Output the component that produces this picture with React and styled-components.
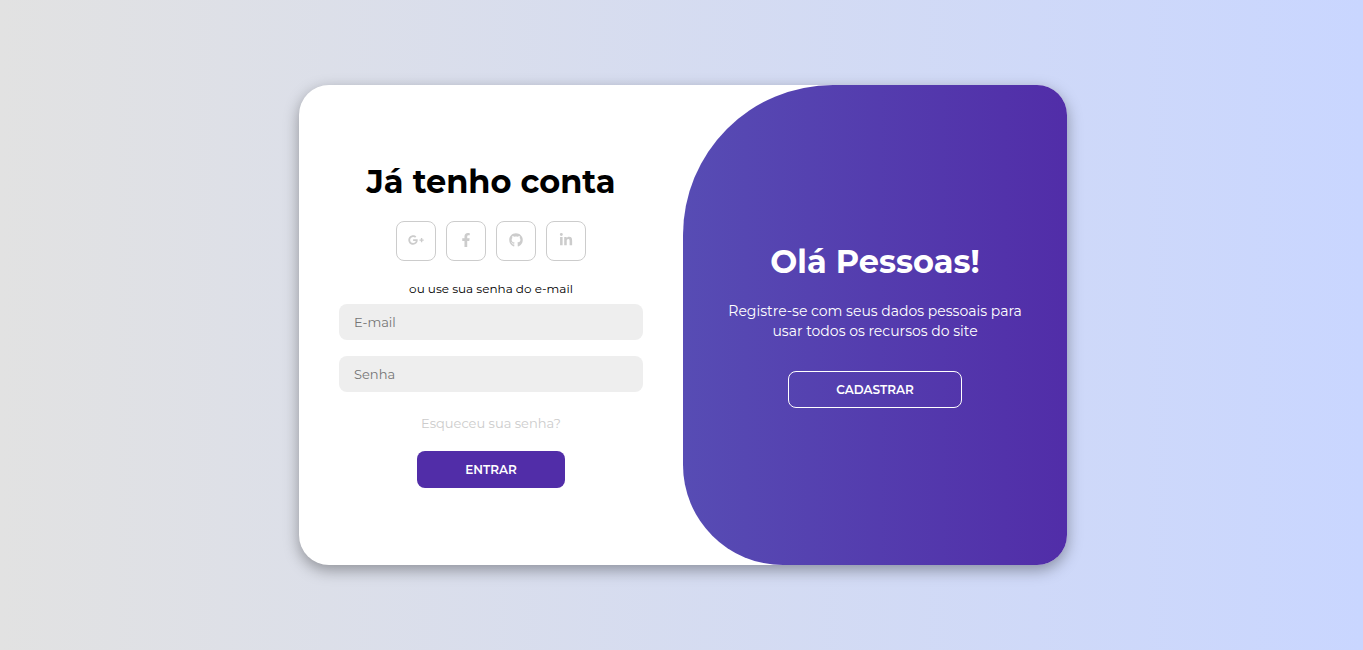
import React from "react";
import styled, { createGlobalStyle } from "styled-components";
import { FaGooglePlusG, FaFacebookF, FaGithub, FaLinkedinIn } from "react-icons/fa";

const GlobalStyle = createGlobalStyle`
  * {
    margin: 0;
    padding: 0;
    box-sizing: border-box;
    font-family: Montserrat, Inter, "Open Sans", sans-serif;
  }
`;

const Page = styled.main`
  display: flex;
  align-items: center;
  justify-content: center;
  min-height: 100vh;
  padding-left: 3px;
  background: linear-gradient(to right, #e2e2e2, #c9d6ff);
`;

const Card = styled.div`
  display: grid;
  grid-template-columns: 1fr 1fr;
  width: 768px;
  max-width: 100%;
  min-height: 480px;
  overflow: hidden;
  background: #fff;
  border-radius: 30px;
  box-shadow: 0 5px 15px rgba(0, 0, 0, 0.35);
`;

const LoginForm = styled.form`
  display: flex;
  flex-direction: column;
  align-items: center;
  justify-content: center;
  padding: 0 40px;
`;

const WelcomePanel = styled.section`
  display: flex;
  flex-direction: column;
  align-items: center;
  justify-content: center;
  padding: 0 30px;
  color: #fff;
  text-align: center;
  background: linear-gradient(to right, #574cb4, #512da8);
  border-radius: 150px 0 0 100px;
`;

const Title = styled.h1`
  font-size: 32px;
  font-weight: 700;
  line-height: 39px;
  white-space: nowrap;
`;

const SocialIcons = styled.nav`
  display: flex;
  gap: 10px;
  margin: 20px 0;
`;

const SocialLink = styled.a`
  display: flex;
  align-items: center;
  justify-content: center;
  width: 40px;
  height: 40px;
  padding-bottom: 2px;
  color: #ccc;
  border: 1px solid #ccc;
  border-radius: 8px;

  svg {
    width: ${({ $wide }) => ($wide ? "16px" : "14px")};
    height: ${({ $wide }) => ($wide ? "16px" : "14px")};
  }
`;

const Hint = styled.span`
  margin-bottom: 8px;
  color: #000;
  font-size: 12px;
  line-height: 15px;
`;

const Field = styled.input`
  width: 100%;
  height: 36px;
  margin-bottom: 16px;
  padding: 0 15px;
  color: #333;
  font-size: 13px;
  background: #eee;
  border: none;
  border-radius: 8px;
  outline: none;
`;

const ForgotLink = styled.a`
  margin: 7px 0 20px;
  color: #ccc;
  font-size: 13px;
  line-height: 16px;
  text-decoration: none;
`;

const Message = styled.p`
  margin: 20px 0 30px;
  font-size: 14px;
  font-weight: 400;
  line-height: 20px;
`;

const Button = styled.button`
  height: 37px;
  padding: 0 47px;
  color: #fff;
  font-size: 12px;
  font-weight: 600;
  text-transform: uppercase;
  background: ${({ $outlined }) => ($outlined ? "transparent" : "#512da8")};
  border: 1px solid ${({ $outlined }) => ($outlined ? "#fff" : "transparent")};
  border-radius: 8px;
  cursor: pointer;
`;

const networks = [
  { name: "Google Plus", Icon: FaGooglePlusG, wide: true },
  { name: "Facebook", Icon: FaFacebookF },
  { name: "GitHub", Icon: FaGithub },
  { name: "LinkedIn", Icon: FaLinkedinIn },
];

export default function App() {
  return (
    <>
      <GlobalStyle />
      <Page>
        <Card>
          <LoginForm onSubmit={(event) => event.preventDefault()}>
            <Title>Já tenho conta</Title>
            <SocialIcons>
              {networks.map(({ name, Icon, wide }) => (
                <SocialLink key={name} href="#" aria-label={name} $wide={wide}>
                  <Icon />
                </SocialLink>
              ))}
            </SocialIcons>
            <Hint>ou use sua senha do e-mail</Hint>
            <Field type="email" placeholder="E-mail" aria-label="E-mail" />
            <Field type="password" placeholder="Senha" aria-label="Senha" />
            <ForgotLink href="#">Esqueceu sua senha?</ForgotLink>
            <Button type="submit">Entrar</Button>
          </LoginForm>
          <WelcomePanel>
            <Title>Olá Pessoas!</Title>
            <Message>Registre-se com seus dados pessoais para usar todos os recursos do site</Message>
            <Button type="button" $outlined>Cadastrar</Button>
          </WelcomePanel>
        </Card>
      </Page>
    </>
  );
}
